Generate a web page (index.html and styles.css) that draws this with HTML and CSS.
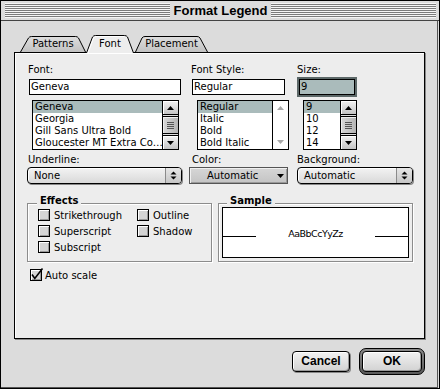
FILE: index.html
```html
<!DOCTYPE html>
<html lang="en">
<head>
<meta charset="utf-8">
<title>Format Legend</title>
<link rel="stylesheet" href="styles.css">
</head>
<body>
<div class="window">
  <div class="titlebar">
    <div class="stripes"><span class="title">Format Legend</span></div>
  </div>
  <div class="content">
    <div class="tabs">
      <div class="tab tab-patterns">
        <svg class="tab-shape" width="66" height="16" viewBox="0 0 66 16"><defs><linearGradient id="tg" x1="0" y1="0" x2="0" y2="1"><stop offset="0" stop-color="#dedede"/><stop offset="1" stop-color="#c2c2c2"/></linearGradient></defs><path d="M0.5,16 L8.5,2 Q9.5,0.5 11.5,0.5 L55.5,0.5 Q57.5,0.5 58.5,2 L65.5,16" fill="url(#tg)" stroke="#000"/></svg>
        <span class="tab-label">Patterns</span>
      </div>
      <div class="tab tab-font active">
        <svg class="tab-shape" width="48" height="18" viewBox="0 0 48 18"><path d="M0.5,18 L6.5,2 Q7.5,0.5 9.5,0.5 L38.5,0.5 Q40.5,0.5 41.5,2 L47.5,18" fill="#ededed" stroke="#000"/><path d="M2,18 L7.6,3 Q8.5,1.5 10,1.5 L38,1.5" fill="none" stroke="#fff"/></svg>
        <span class="tab-label">Font</span>
      </div>
      <div class="tab tab-placement">
        <svg class="tab-shape" width="73" height="16" viewBox="0 0 73 16"><defs><linearGradient id="tg2" x1="0" y1="0" x2="0" y2="1"><stop offset="0" stop-color="#dedede"/><stop offset="1" stop-color="#c2c2c2"/></linearGradient></defs><path d="M0.5,16 L7,2 Q8,0.5 10,0.5 L62,0.5 Q64,0.5 65,2 L72.5,16" fill="url(#tg2)" stroke="#000"/></svg>
        <span class="tab-label">Placement</span>
      </div>
    </div>

    <div class="panel">
      <div class="row-lists">
        <div class="col col-font">
          <div class="label">Font:</div>
          <div class="field">Geneva</div>
          <div class="list">
            <div class="items">
              <div class="item sel">Geneva</div>
              <div class="item">Georgia</div>
              <div class="item">Gill Sans Ultra Bold</div>
              <div class="item">Gloucester MT Extra Co…</div>
            </div>
            <div class="sb">
              <div class="sb-btn sb-up"><svg width="7" height="4" viewBox="0 0 7 4"><polygon points="0,4 3.5,0 7,4"/></svg></div>
              <div class="sb-track"><div class="sb-thumb"><svg width="7" height="7" viewBox="0 0 7 7"><rect x="0" y="0" width="7" height="1"/><rect x="0" y="2" width="7" height="1"/><rect x="0" y="4" width="7" height="1"/><rect x="0" y="6" width="7" height="1"/></svg></div></div>
              <div class="sb-btn sb-down"><svg width="7" height="4" viewBox="0 0 7 4"><polygon points="0,0 7,0 3.5,4"/></svg></div>
            </div>
          </div>
        </div>

        <div class="col col-style">
          <div class="label">Font Style:</div>
          <div class="field">Regular</div>
          <div class="list">
            <div class="items">
              <div class="item sel">Regular</div>
              <div class="item">Italic</div>
              <div class="item">Bold</div>
              <div class="item">Bold Italic</div>
            </div>
            <div class="sb sb-disabled">
              <div class="sb-btn sb-up"><svg width="7" height="4" viewBox="0 0 7 4"><polygon points="0,4 3.5,0 7,4"/></svg></div>
              <div class="sb-track"></div>
              <div class="sb-btn sb-down"><svg width="7" height="4" viewBox="0 0 7 4"><polygon points="0,0 7,0 3.5,4"/></svg></div>
            </div>
          </div>
        </div>

        <div class="col col-size">
          <div class="label">Size:</div>
          <div class="field focused">9</div>
          <div class="list">
            <div class="items">
              <div class="item sel">9</div>
              <div class="item">10</div>
              <div class="item">12</div>
              <div class="item">14</div>
            </div>
            <div class="sb">
              <div class="sb-btn sb-up"><svg width="7" height="4" viewBox="0 0 7 4"><polygon points="0,4 3.5,0 7,4"/></svg></div>
              <div class="sb-track"><div class="sb-thumb"><svg width="7" height="7" viewBox="0 0 7 7"><rect x="0" y="0" width="7" height="1"/><rect x="0" y="2" width="7" height="1"/><rect x="0" y="4" width="7" height="1"/><rect x="0" y="6" width="7" height="1"/></svg></div></div>
              <div class="sb-btn sb-down"><svg width="7" height="4" viewBox="0 0 7 4"><polygon points="0,0 7,0 3.5,4"/></svg></div>
            </div>
          </div>
        </div>
      </div>

      <div class="row-popups">
        <div class="col col-underline">
          <div class="label">Underline:</div>
          <div class="popup popup-round">
            <span class="popup-text">None</span>
            <span class="popup-arrows"><svg width="7" height="9" viewBox="0 0 7 9"><polygon points="0.5,3.5 3.5,0.5 6.5,3.5"/><polygon points="0.5,5.5 6.5,5.5 3.5,8.5"/></svg></span>
          </div>
        </div>
        <div class="col col-color">
          <div class="label">Color:</div>
          <div class="popup popup-bevel">
            <span class="popup-text">Automatic</span>
            <svg class="down-tri" width="7" height="4" viewBox="0 0 7 4"><polygon points="0,0 7,0 3.5,4"/></svg>
          </div>
        </div>
        <div class="col col-bg">
          <div class="label">Background:</div>
          <div class="popup popup-round">
            <span class="popup-text">Automatic</span>
            <span class="popup-arrows"><svg width="7" height="9" viewBox="0 0 7 9"><polygon points="0.5,3.5 3.5,0.5 6.5,3.5"/><polygon points="0.5,5.5 6.5,5.5 3.5,8.5"/></svg></span>
          </div>
        </div>
      </div>

      <div class="row-groups">
        <div class="group group-effects">
          <div class="group-title">Effects</div>
          <div class="checks">
            <div class="check"><span class="box"></span>Strikethrough</div>
            <div class="check"><span class="box"></span>Outline</div>
            <div class="check"><span class="box"></span>Superscript</div>
            <div class="check"><span class="box"></span>Shadow</div>
            <div class="check"><span class="box"></span>Subscript</div>
          </div>
        </div>
        <div class="group group-sample">
          <div class="group-title">Sample</div>
          <div class="sample-box">
            <div class="sample-row">
              <span class="sample-line"></span>
              <span class="sample-text">AaBbCcYyZz</span>
              <span class="sample-line"></span>
            </div>
          </div>
        </div>
      </div>

      <div class="check auto">
        <span class="box checked"><svg class="tick" width="14" height="14" viewBox="0 0 14 14"><path d="M2,6.5 L4.8,10.5 L12.5,0.5" fill="none" stroke="#000" stroke-width="1.6"/></svg></span>Auto scale
      </div>
    </div>

    <div class="buttons">
      <div class="btn">Cancel</div>
      <div class="ok-ring"><div class="btn btn-ok">OK</div></div>
    </div>
  </div>
</div>
</body>
</html>
```

FILE: styles.css
```css
* { box-sizing: border-box; }
html, body { margin: 0; padding: 0; }
body {
  width: 440px;
  height: 389px;
  overflow: hidden;
  background: #dcdcdc;
  font-family: "DejaVu Sans", Verdana, sans-serif;
  font-size: 10px;
  color: #000;
}

.window {
  width: 440px;
  height: 389px;
  border: 1px solid #000;
  background: #dcdcdc;
  display: flex;
  flex-direction: column;
}

/* title bar */
.titlebar {
  height: 20px;
  flex: none;
  border-bottom: 1px solid #444;
  padding: 2px 3px 0 4px;
  background: #dcdcdc;
}
.stripes {
  height: 15px;
  background: repeating-linear-gradient(to bottom, #f6f6f6 0 1px, #7c7c7c 1px 2px);
  display: flex;
  justify-content: center;
}
.title {
  background: #dcdcdc;
  padding: 0 4px;
  font: bold 13px/15px "Liberation Sans", Arial, sans-serif;
}

/* body */
.content {
  flex: 1;
  margin-right: 1px;
  border-right: 1px solid #555;
  border-bottom: 1px solid #555;
  background: #dcdcdc;
}

/* tabs */
.tabs {
  display: flex;
  align-items: flex-end;
  height: 18px;
  margin: 14px 0 -1px 19px;
  position: relative;
  z-index: 1;
}
.tab {
  position: relative;
  display: flex;
  justify-content: center;
}
.tab-shape {
  position: absolute;
  left: 0;
  top: 0;
  overflow: visible;
}
.tab-label {
  position: relative;
  line-height: 16px;
}
.tab-patterns { width: 66px; height: 16px; margin-bottom: 1px; }
.tab-font { width: 48px; height: 18px; padding-top: 1px; }
.tab-placement { width: 73px; height: 16px; margin-bottom: 1px; margin-left: 1px; }

/* panel */
.panel {
  margin-left: 13px;
  width: 411px;
  height: 287px;
  border: 1px solid #000;
  background: #ededed;
  box-shadow: 1px 1px 0 #888, inset 1px 1px 0 #fff;
  padding: 10px 0 0 12px;
}

.row-lists,
.row-popups {
  display: grid;
  grid-template-columns: 162px 108px 116px;
}
.row-popups { margin-top: 3px; }

.label {
  height: 13px;
  line-height: 13px;
  white-space: nowrap;
}

.field {
  margin-top: 3px;
  height: 16px;
  border: 1px solid #000;
  background: #fff;
  line-height: 14px;
  padding-left: 1px;
  white-space: nowrap;
}
.field.focused {
  background: #aabbbb;
  box-shadow: 0 0 0 2px #5c6868;
}

.list {
  margin-top: 5px;
  height: 50px;
  border: 1px solid #000;
  background: #fff;
  display: flex;
}
.items {
  flex: 1;
  overflow: hidden;
}
.item {
  height: 12px;
  line-height: 12px;
  padding-left: 2px;
  white-space: nowrap;
  overflow: hidden;
}
.item.sel { background: #aabbbb; }

.col-font .label { padding-left: 1px; }
.col-font .field { margin-left: 2px; width: 152px; }
.col-font .list { margin-left: 5px; width: 147px; }
.col-style .label { padding-left: 2px; }
.col-style .field { margin-left: 3px; width: 93px; }
.col-style .list { margin-left: 8px; width: 92px; }
.col-size .field { margin-left: 2px; width: 56px; }
.col-size .list { margin-left: 6px; width: 54px; }

/* scrollbars */
.sb {
  width: 16px;
  flex: none;
  border-left: 1px solid #000;
  display: flex;
  flex-direction: column;
  background: #dedede;
}
.sb-btn {
  height: 14px;
  flex: none;
  display: flex;
  align-items: center;
  justify-content: center;
  background: linear-gradient(#f2f2f2, #c4c4c4);
  box-shadow: inset 1px 1px 0 #fff;
}
.sb-up { border-bottom: 1px solid #000; }
.sb-down { border-top: 1px solid #000; }
.sb-btn svg { fill: #000; }
.sb-track {
  flex: 1;
  padding-top: 1px;
}
.sb-thumb {
  height: 18px;
  border-top: 1px solid #000;
  border-bottom: 1px solid #000;
  background: linear-gradient(to right, #d8d8d8, #b4b4b4);
  box-shadow: inset 1px 1px 0 #eee;
  display: flex;
  align-items: center;
  justify-content: center;
}
.sb-thumb svg { fill: #555; }
.sb-disabled { background: #fff; }
.sb-disabled .sb-btn {
  background: #fff;
  box-shadow: none;
  border: none;
}
.sb-disabled .sb-btn svg { fill: #a8a8a8; }

/* popups */
.popup {
  margin-top: 1px;
  height: 17px;
  display: flex;
  align-items: center;
  white-space: nowrap;
}
.popup-round {
  border: 1px solid #000;
  border-radius: 4px;
  background: linear-gradient(#f3f3f3, #d9d9d9);
  box-shadow: 1px 1px 0 #888, inset 1px 1px 0 #fff;
}
.popup-text {
  flex: 1;
  line-height: 15px;
  padding-left: 6px;
}
.popup-arrows {
  width: 16px;
  height: 100%;
  border-left: 1px solid #8a8a8a;
  border-radius: 0 3px 3px 0;
  background: linear-gradient(#e6e6e6, #c6c6c6);
  display: flex;
  align-items: center;
  justify-content: center;
}
.popup-arrows svg { fill: #000; }
.popup-bevel {
  border: 1px solid #555;
  background: linear-gradient(#d6d6d6, #c4c4c4);
  box-shadow: inset 1px 1px 0 #f0f0f0, inset -1px -1px 0 #999;
}
.popup-bevel .popup-text { padding-left: 17px; }
.down-tri {
  fill: #000;
  margin-right: 3px;
}
.col-underline .label { padding-left: 1px; }
.col-underline .popup { width: 155px; }
.col-color .label { padding-left: 3px; }
.col-color .popup { width: 99px; }
.col-bg .popup { width: 116px; }

/* groups */
.row-groups {
  display: flex;
  gap: 6px;
  margin-top: 19px;
}
.group {
  height: 59px;
  border: 1px solid #8c8c8c;
  box-shadow: 1px 1px 0 #fff, inset 1px 1px 0 #fff;
}
.group-effects { width: 185px; }
.group-sample { width: 195px; }
.group-title {
  width: fit-content;
  margin: -10px 0 0 9px;
  padding: 0 3px;
  height: 13px;
  line-height: 13px;
  background: #ededed;
  font-weight: bold;
}
.group-sample .group-title { margin-left: 8px; }

.checks {
  display: grid;
  grid-template-columns: 99px auto;
  grid-auto-rows: 16px;
  padding-left: 10px;
}
.check {
  display: flex;
  align-items: center;
  gap: 4px;
  white-space: nowrap;
}
.box {
  position: relative;
  width: 12px;
  height: 12px;
  flex: none;
  border: 1px solid #000;
  background: #d4d4d4;
  box-shadow: inset 1px 1px 0 #fff, inset -1px -1px 0 #999;
}
.tick {
  position: absolute;
  left: -1px;
  top: -2px;
  overflow: visible;
}
.check.auto {
  margin: 6px 0 0 3px;
  height: 14px;
  gap: 3px;
}

.sample-box {
  margin: 0 3px;
  height: 51px;
  border: 1px solid #000;
  background: #fff;
}
.sample-row {
  display: grid;
  grid-template-columns: 33px 1fr 33px;
  margin-top: 20px;
}
.sample-line {
  height: 1px;
  margin-top: 8px;
  background: #000;
}
.sample-text {
  text-align: center;
  font-size: 9.5px;
  letter-spacing: -0.5px;
  line-height: 11px;
}

/* buttons */
.buttons {
  display: flex;
  justify-content: flex-end;
  align-items: center;
  gap: 9px;
  margin-top: 9px;
  padding-right: 12px;
}
.btn {
  width: 58px;
  height: 21px;
  border: 1px solid #000;
  border-radius: 4px;
  background: linear-gradient(#f2f2f2, #d2d2d2);
  box-shadow: inset 1px 1px 0 #fff, inset -1px -1px 0 #999, 1px 1px 0 #888;
  text-align: center;
  font: bold 12px/19px "Liberation Sans", Arial, sans-serif;
}
.ok-ring {
  width: 66px;
  height: 27px;
  border: 1px solid #000;
  border-radius: 7px;
  padding: 2px;
  background: linear-gradient(#8a8a8a, #5a5a5a);
}
.btn-ok {
  width: 60px;
  box-shadow: inset 1px 1px 0 #fff, inset -1px -1px 0 #999;
}
```
